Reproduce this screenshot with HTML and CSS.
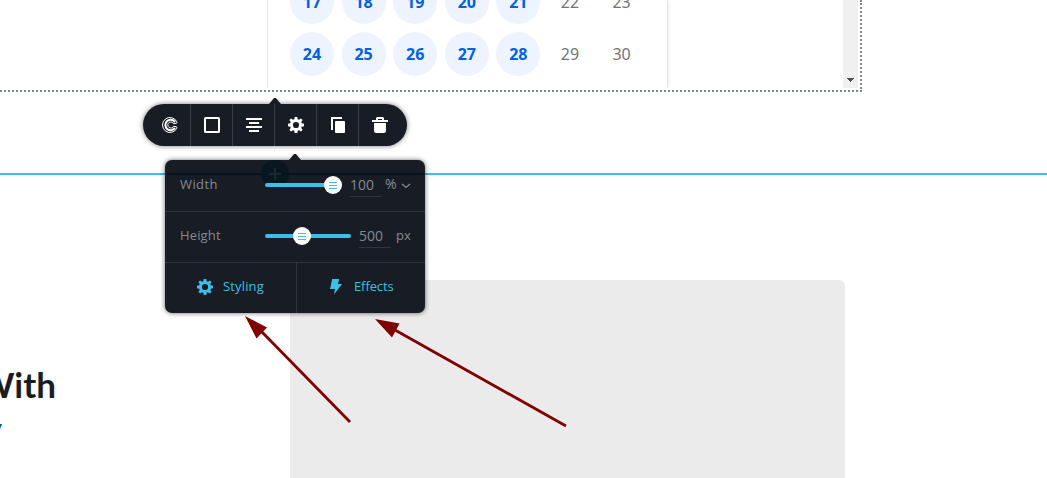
FILE: index.html
```html
<!DOCTYPE html>
<html lang="en">
<head>
<meta charset="utf-8">
<title>Page editor</title>
<link rel="stylesheet" href="styles.css">
</head>
<body>
<main class="editor">
  <section class="frame">
    <div class="calendar">
      <span class="day open"><b>17</b></span><span class="day open"><b>18</b></span><span class="day open"><b>19</b></span><span class="day open"><b>20</b></span><span class="day open"><b>21</b></span><span class="day"><b>22</b></span><span class="day"><b>23</b></span>
      <span class="day open"><b>24</b></span><span class="day open"><b>25</b></span><span class="day open"><b>26</b></span><span class="day open"><b>27</b></span><span class="day open"><b>28</b></span><span class="day"><b>29</b></span><span class="day"><b>30</b></span>
    </div>
    <div class="scrollbar"><svg width="7" height="4" viewBox="0 0 7 4" shape-rendering="crispEdges"><path d="M0 0h7v1H6v1H5v1H4v1H3V3H2V2H1V1H0z" fill="#505050"/></svg></div>
  </section>
  <div class="gap"></div>
  <section class="feature">
    <div class="copy"><h1>With</h1><p>y</p></div>
    <div class="placeholder"></div>
  </section>

  <nav class="toolbar">
    <svg class="pointer" width="12" height="7" viewBox="0 0 12 7"><path d="M0 7l5-6h2l5 6z" fill="#181c24"/></svg>
    <button class="tool first"><svg width="16" height="16" viewBox="0 0 16 16" fill="none" stroke="#fff"><path d="M14.700 4.600A7.500 7.500 0 1 0 14.700 11.400" stroke-width="1"/><path d="M14.700 4.600Q15.600 5.900 14.200 6.300L11.500 6.700M14.700 11.400Q15.500 10.200 14.200 9.700L11.500 9.300" stroke-width="1"/><path d="M12.900 5.100A5.200 5.200 0 1 0 12.900 10.900" stroke-width="2"/><path d="M11.500 6.700A3 3 0 1 0 11.500 9.300" stroke-width="1"/></svg></button>
    <button class="tool"><svg width="16" height="16" viewBox="0 0 16 16"><rect x="1" y="1" width="14" height="14" rx=".6" fill="none" stroke="#fff" stroke-width="2"/></svg></button>
    <button class="tool"><svg width="16" height="14" viewBox="0 0 16 14"><path d="M0 1h16M3 5h10M0 9h16M3 13h10" stroke="#fff" stroke-width="2"/></svg></button>
    <button class="tool"><svg width="16" height="16" viewBox="0 0 16 16"><use href="#gear" fill="#fff"/></svg></button>
    <button class="tool"><svg width="14" height="16" viewBox="0 0 14 16"><path d="M0 13V0h11v2H2v11z" fill="#fff"/><rect x="4" y="4" width="10" height="12" rx="1" fill="#fff"/></svg></button>
    <button class="tool last"><svg width="16" height="16" viewBox="0 0 16 16"><path d="M0 3h4V1l1-1h6l1 1v2h4v2H0zM6 2v1h4V2zM2 6h12v8q0 2-2 2H4q-2 0-2-2z" fill="#fff" fill-rule="evenodd"/></svg></button>
  </nav>

  <aside class="panel">
    <svg class="pointer" width="12" height="7" viewBox="0 0 12 7"><path d="M0 7l5-6h2l5 6z" fill="#181c24"/></svg>
    <svg class="add" width="28" height="28" viewBox="0 0 28 28"><circle cx="14" cy="14" r="14" fill="#07161f"/><path d="M0 14h28" stroke="#051220" stroke-width="2"/><path d="M8 14h12M14 8v12" stroke="#1d2733" stroke-width="2"/></svg>
    <div class="row">
      <label class="wide">Width</label>
      <div class="slider short"><i class="knob"><svg width="8" height="7" viewBox="0 0 8 7"><path d="M0 .5h8M0 3.5h8M0 6.5h8" stroke="#3dbfe8"/></svg></i></div>
      <span class="value">100</span><span class="unit percent">%</span>
      <svg class="chevron" width="10" height="6" viewBox="0 0 10 6"><path d="M1 1L5 4.500 9 1" fill="none" stroke="#868b93" stroke-width="1.2"/></svg>
    </div>
    <div class="row">
      <label>Height</label>
      <div class="slider"><i class="knob middle"><svg width="8" height="7" viewBox="0 0 8 7"><path d="M0 .5h8M0 3.5h8M0 6.5h8" stroke="#3dbfe8"/></svg></i></div>
      <span class="value">500</span><span class="unit">px</span>
    </div>
    <div class="actions">
      <button class="action styling"><svg width="16" height="16" viewBox="0 0 16 16"><use href="#gear" fill="#3dbfe8"/></svg><span>Styling</span></button>
      <button class="action effects"><svg width="12" height="16" viewBox="0 0 12 16"><path d="M2.200 0h7L8 5h4L4 15.500 5 10H0z" fill="#3dbfe8"/></svg><span>Effects</span></button>
    </div>
  </aside>

  <svg class="arrows" width="1047" height="478" viewBox="0 0 1047 478" fill="#800000" stroke="#800000">
    <path d="M262 332L350 422M395 330L566 426" stroke-width="2.8"/>
    <path d="M245 316l22 11.500-10.500 11zM375 319l24.500 4.500-7.500 14z" stroke="none"/>
  </svg>
  <svg class="symbols" width="0" height="0"><defs><path id="gear" fill-rule="evenodd" d="M6.700 0h2.600l.4 2.200 1.300.5L12.900 1.400l1.700 1.700L13.300 5l.5 1.300 2.200.4v2.600l-2.200.4-.5 1.300 1.300 1.900-1.700 1.700-1.900-1.300-1.300.5-.4 2.200H6.700l-.4-2.200-1.300-.5-1.900 1.300-1.700-1.700L2.700 11l-.5-1.300L0 9.300V6.700l2.200-.4L2.700 5 1.400 3.100l1.700-1.700L5 2.700l1.300-.5zM8 4.900a3.100 3.100 0 1 0 0 6.200 3.100 3.100 0 0 0 0-6.200z"/></defs></svg>
</main>
</body>
</html>
```
FILE: styles.css
```css
* { box-sizing: border-box; }
body { margin: 0; background: #fff; }
button { border: 0; padding: 0; background: none; font: inherit; color: inherit; }
svg { display: block; flex: none; }
.editor { position: relative; width: 1047px; height: 478px; overflow: hidden; font-family: "Open Sans", sans-serif; }
.frame { display: flex; justify-content: flex-end; width: 862px; height: 92px; padding: 0 2px 2px 0; border: 2px dotted #7f8988; border-width: 0 2px 2px 0; }
.calendar { width: 401px; height: 88px; margin-right: 175px; padding: 0 18px; border: solid #e4e4e4; border-width: 0 1px; box-shadow: 3px 0 4px -2px #0001; display: grid; grid-template-columns: repeat(7, 51.6px); grid-template-rows: 24px 44px; row-gap: 8px; align-items: end; clip-path: inset(0 -6px 0 0); }
.day { display: grid; place-items: center; width: 44px; height: 44px; margin-left: 4px; border-radius: 50%; color: #737373; font: 16px/44px "Noto Sans", sans-serif; }
.day b { font-weight: 400; }
.open { background: #edf4ff; color: #0060e6; }
.day.open b { font-weight: 700; }
.scrollbar { display: flex; align-items: flex-end; justify-content: center; width: 15px; height: 88px; padding-bottom: 6px; background: #f0f0f0; }
.gap { height: 83px; border-bottom: 2px solid #3dbfe8; }
.feature { display: flex; height: 303px; padding-top: 105px; }
.copy { width: 290px; }
.copy h1 { display: flex; justify-content: flex-end; width: 56px; height: 44px; margin: 82px 0 0; font: 700 35px/44px Lato, sans-serif; color: #1b1c1e; }
.copy p { display: flex; justify-content: flex-end; width: 2px; height: 26px; margin: 0; overflow: hidden; font: 700 35px/44px Lato, sans-serif; color: #174c91; clip-path: inset(18px 0 0 0); }
.placeholder { width: 555px; background: #ebebeb; border-radius: 6px 6px 0 0; }
.toolbar { position: absolute; left: 143px; top: 104px; display: flex; width: 264px; height: 42px; border-radius: 21px; background: #181c24; box-shadow: 0 0 5px #0008; }
.toolbar .pointer { position: absolute; left: 126px; top: -7px; }
.tool { display: grid; place-items: center; width: 42px; height: 42px; border-left: 1px solid #3a3e46; }
.first { width: 47px; border: 0; padding-left: 7px; }
.last { width: 49px; padding-right: 6px; }
.panel { position: absolute; left: 165px; top: 160px; width: 260px; height: 153px; border-radius: 7px; background: linear-gradient(#0000 13px, #051220 13px, #051220 15px, #0000 15px), #181c24; box-shadow: 0 0 5px #0009; color: #868b93; font: 13px/20px "Open Sans", sans-serif; }
.panel .pointer { position: absolute; left: 124px; top: -7px; }
.add { position: absolute; left: 96px; top: 0; }
.row { position: relative; display: flex; align-items: center; height: 51px; padding: 0 15px; }
.row + .row, .actions { border-top: 1px solid #30353d; }
.row > * { flex: none; }
.row label { width: 85px; line-height: 20px; margin-top: -4px; letter-spacing: .15px; }
.row .wide { letter-spacing: .4px; }
.slider { display: flex; align-items: center; width: 86px; height: 4px; border-radius: 2px; background: #3dbfe8; margin-top: -1px; }
.row + .row .slider { margin-top: -2px; }
.short { width: 77px; }
.knob { display: grid; flex: none; place-items: center; width: 18px; height: 18px; margin-left: 59px; border-radius: 50%; background: #fff; }
.middle { margin-left: 28px; }
.value { width: 32px; height: 24px; margin-left: 8px; margin-top: -2px; border-bottom: 1px solid #30353d; line-height: 23px; font-size: 14px; }
.unit { margin-left: 5px; margin-top: -4px; letter-spacing: .1px; }
.percent { width: 12px; margin-left: 3px; font-size: 14px; }
.chevron { margin-left: 4px; }
.actions { display: flex; height: 51px; color: #3dbfe8; }
.action { display: flex; align-items: center; height: 50px; padding-bottom: 2px; }
.action span { margin-top: -2px; }
.styling { width: 131px; padding-left: 32px; gap: 10px; letter-spacing: .15px; }
.effects { width: 129px; padding-left: 33px; gap: 12px; border-left: 1px solid #30353d; letter-spacing: -.1px; }
.arrows { position: absolute; inset: 0; }
.symbols { position: absolute; }
```
